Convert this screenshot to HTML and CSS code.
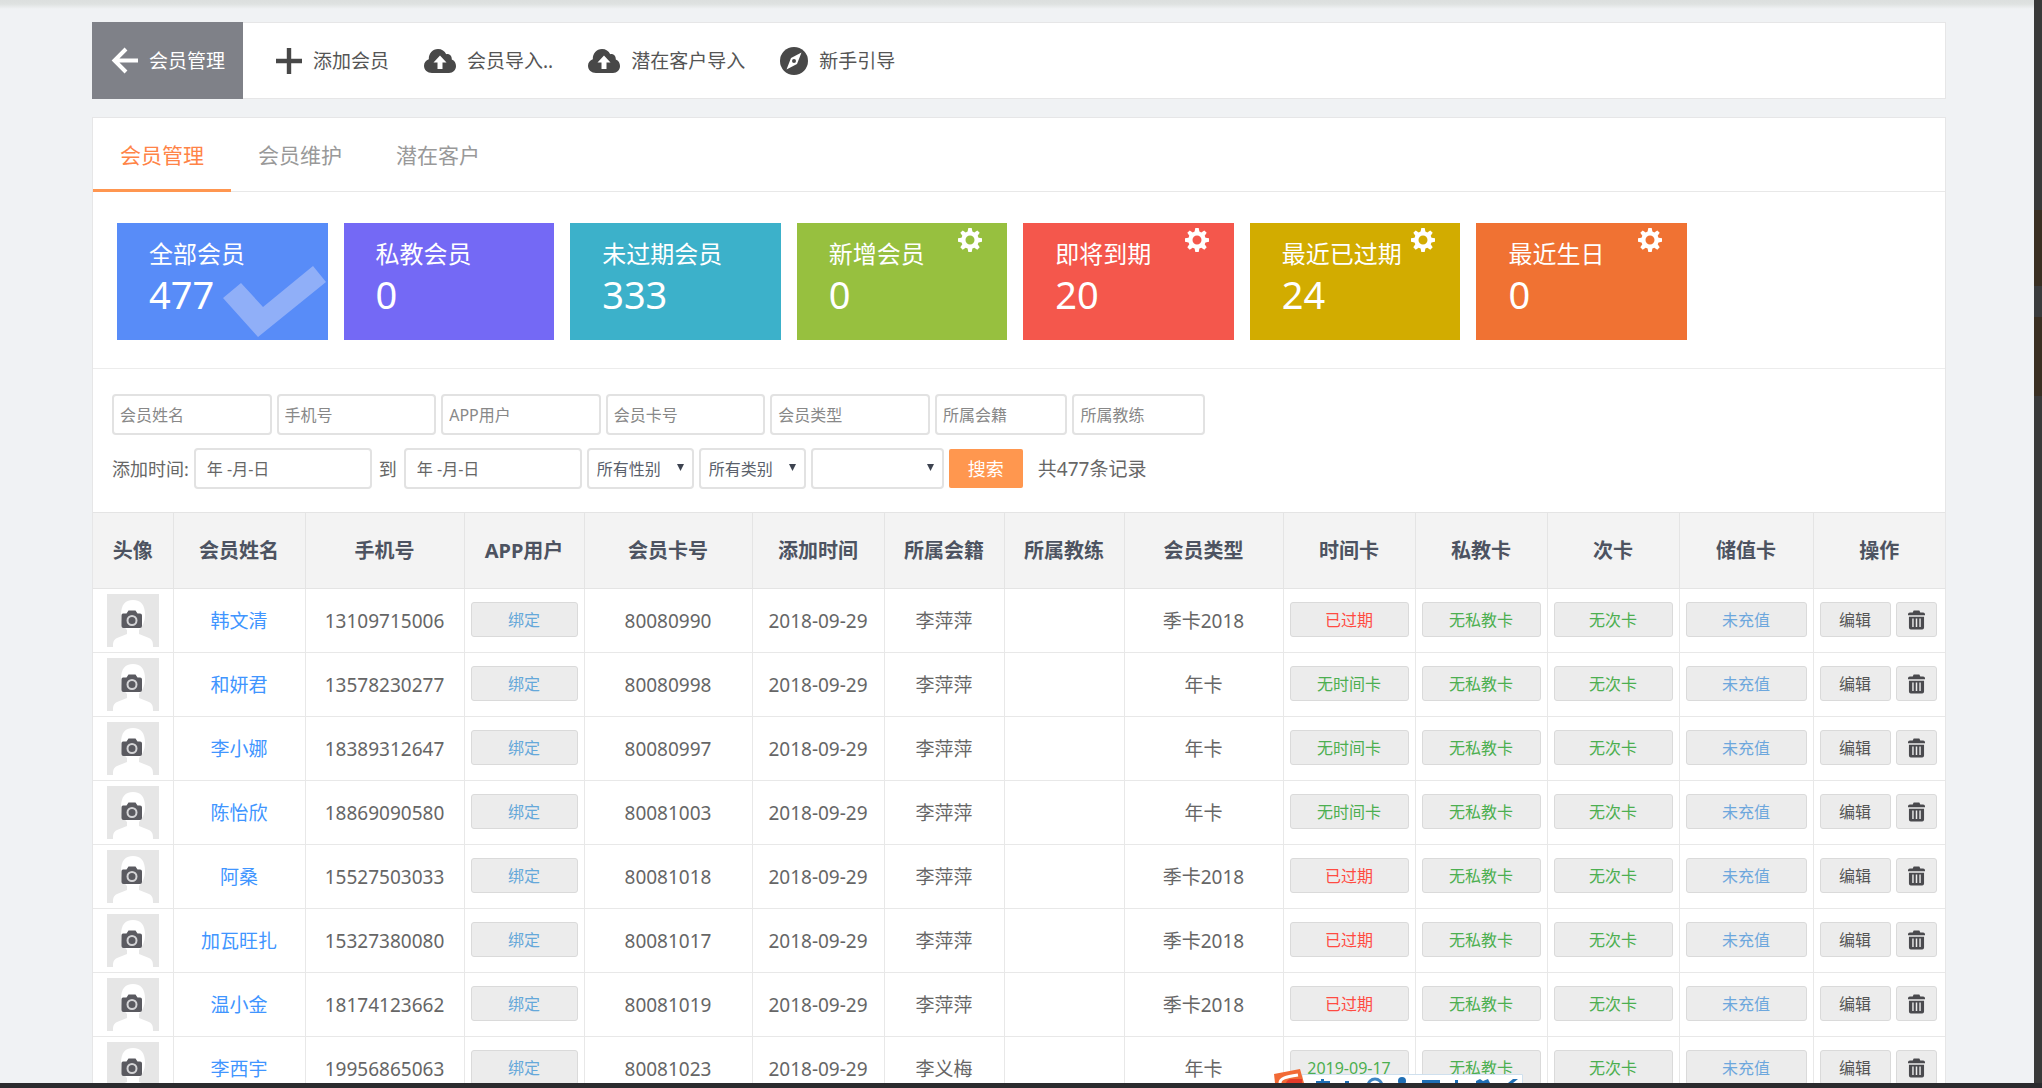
FILE: index.html
```html
<!DOCTYPE html>
<html lang="zh-CN">
<head>
<meta charset="utf-8">
<title>会员管理</title>
<link rel="stylesheet" href="styles.css">
</head>
<body>
<svg class="sprite" aria-hidden="true">
  <symbol id="i-cloud" viewBox="0 0 32 24"><path fill-rule="evenodd" d="M8 24C3.500 24 0 21 0 16.800c0-3.300 2-5.600 4.800-6.600C4.600 4.500 8.500 0 14 0c3.800 0 6.800 2 8.200 5.200 3.200-.6 5.800 1.700 5.600 5.200C30.500 11.500 32 14 32 17c0 4-3 7-7 7zM16 6.500 9.500 13.500h4V20h5v-6.500h4z"/></symbol>
  <symbol id="i-gear" viewBox="0 0 24 24"><path fill-rule="evenodd" d="M10.300 0h3.400l.7 3.600 1.900.8 3-2 2.400 2.400-2 3 .8 1.900 3.500.6v3.400l-3.500.7-.8 1.900 2 3-2.400 2.400-3-2-1.900.8-.7 3.500h-3.400l-.7-3.500-1.900-.8-3 2-2.400-2.400 2-3-.8-1.900L0 13.700v-3.400l3.500-.6.8-1.900-2-3 2.400-2.400 3 2 1.900-.8zM12 7.500a4.500 4.500 0 1 0 0 9 4.500 4.500 0 0 0 0-9z"/></symbol>
  <symbol id="i-avatar" viewBox="0 0 52 53"><path fill="#e6e6e6" d="M0 0h52v53H0z"/><path fill="#fff" d="M14 21C14 11 18 6 26 6s12 5 12 15c0 7-3 12-6 15v4l10 4c4 2 4 5 4 9H6c0-4 0-7 4-9l10-4v-4c-3-3-6-8-6-15z"/><path fill="#5a5a60" fill-rule="evenodd" d="M16 19.500h3.500l2-3h7l2 3H33q2 0 2 2V32q0 2-2 2H16.500q-2 0-2-2V21.500q0-2 1.500-2z"/><circle cx="25" cy="26.500" r="4.500" fill="none" stroke="#d4d4d6" stroke-width="2"/></symbol>
  <symbol id="i-trash" viewBox="0 0 18 20"><path fill-rule="evenodd" d="M6 0h6l1 2h3q2 0 2 2v1H0V4q0-2 2-2h3zM1 6.500h16V18q0 2-2 2H3q-2 0-2-2zM4.500 8.500v9H6v-9zm3.700 0v9h1.600v-9zm3.800 0v9h1.500v-9z"/></symbol>
</svg>

<div class="desktop">
  <main class="page">
    <header class="toolbar">
      <button class="back" type="button">
        <svg width="27" height="27" viewBox="0 0 27 27" fill="none" stroke="#fff" stroke-width="4"><path d="M15 2 3.500 13.500 15 25M4 13.500h23"/></svg>
        会员管理
      </button>
      <nav class="tools">
        <a class="tool" href="#"><svg width="26" height="26" viewBox="0 0 26 26"><path d="M10.800 0h4.400v10.800H26v4.400H15.200V26h-4.400V15.200H0v-4.400h10.800z"/></svg>添加会员</a>
        <a class="tool" href="#"><svg width="32" height="24"><use href="#i-cloud"/></svg>会员导入..</a>
        <a class="tool" href="#"><svg width="32" height="24"><use href="#i-cloud"/></svg>潜在客户导入</a>
        <a class="tool" href="#"><svg width="28" height="28" viewBox="0 0 28 28"><circle cx="14" cy="14" r="14"/><path fill="#fff" fill-rule="evenodd" d="M21.500 5.500 17 17 6.500 22.500 11 11zM14 12a2 2 0 1 0 0 4 2 2 0 0 0 0-4z"/></svg>新手引导</a>
      </nav>
    </header>

    <section class="panel">
      <nav class="tabs">
        <a class="tab tab-active" href="#">会员管理</a>
        <a class="tab" href="#">会员维护</a>
        <a class="tab" href="#">潜在客户</a>
      </nav>

      <div class="cards">
        <div class="card blue"><span class="card-label">全部会员</span><span class="card-value">477</span><svg class="check" width="103" height="71" viewBox="0 0 103 71"><path d="M0 32 18 17l22 24L90 0l13 16-68 55z"/></svg></div>
        <div class="card purple"><span class="card-label">私教会员</span><span class="card-value">0</span></div>
        <div class="card teal"><span class="card-label">未过期会员</span><span class="card-value">333</span></div>
        <div class="card green"><span class="card-label">新增会员</span><span class="card-value">0</span><button class="gear" type="button" aria-label="设置"><svg width="24" height="24"><use href="#i-gear"/></svg></button></div>
        <div class="card red"><span class="card-label">即将到期</span><span class="card-value">20</span><button class="gear" type="button" aria-label="设置"><svg width="24" height="24"><use href="#i-gear"/></svg></button></div>
        <div class="card gold"><span class="card-label">最近已过期</span><span class="card-value">24</span><button class="gear" type="button" aria-label="设置"><svg width="24" height="24"><use href="#i-gear"/></svg></button></div>
        <div class="card orange"><span class="card-label">最近生日</span><span class="card-value">0</span><button class="gear" type="button" aria-label="设置"><svg width="24" height="24"><use href="#i-gear"/></svg></button></div>
      </div>

      <form class="filters">
        <div class="filter-row filter-texts">
          <input class="field wide" type="text" placeholder="会员姓名" aria-label="会员姓名">
          <input class="field wide" type="text" placeholder="手机号" aria-label="手机号">
          <input class="field wide" type="text" placeholder="APP用户" aria-label="APP用户">
          <input class="field wide" type="text" placeholder="会员卡号" aria-label="会员卡号">
          <input class="field wide" type="text" placeholder="会员类型" aria-label="会员类型">
          <input class="field narrow" type="text" placeholder="所属会籍" aria-label="所属会籍">
          <input class="field narrow" type="text" placeholder="所属教练" aria-label="所属教练">
        </div>
        <div class="filter-row">
          <label for="from">添加时间:</label>
          <input class="field date" id="from" type="text" placeholder="年 -月-日">
          <label class="to" for="until">到</label>
          <input class="field date" id="until" type="text" placeholder="年 -月-日">
          <span class="pick"><select class="field" aria-label="性别"><option>所有性别</option></select><svg width="7" height="7" viewBox="0 0 7 7"><path d="M0 0h7L3.500 7z"/></svg></span>
          <span class="pick"><select class="field" aria-label="类别"><option>所有类别</option></select><svg width="7" height="7" viewBox="0 0 7 7"><path d="M0 0h7L3.500 7z"/></svg></span>
          <span class="pick pick-wide"><select class="field" aria-label="其他"><option></option></select><svg width="7" height="7" viewBox="0 0 7 7"><path d="M0 0h7L3.500 7z"/></svg></span>
          <button class="search" type="submit">搜索</button>
          <span class="total">共477条记录</span>
        </div>
      </form>

      <table class="members">
        <colgroup><col class="w80"><col class="w132"><col class="w159"><col class="w120"><col class="w168"><col class="w132"><col class="w120"><col class="w120"><col class="w159"><col class="w132"><col class="w132"><col class="w132"><col class="w134"><col></colgroup>
        <thead>
          <tr><th>头像</th><th>会员姓名</th><th>手机号</th><th>APP用户</th><th>会员卡号</th><th>添加时间</th><th>所属会籍</th><th>所属教练</th><th>会员类型</th><th>时间卡</th><th>私教卡</th><th>次卡</th><th>储值卡</th><th>操作</th></tr>
        </thead>
        <tbody>
          <tr><td><svg class="avatar" width="52" height="53"><use href="#i-avatar"/></svg></td><td><a href="#">韩文清</a></td><td>13109715006</td><td class="act"><button class="btn bind" type="button">绑定</button></td><td>80080990</td><td>2018-09-29</td><td>李萍萍</td><td></td><td>季卡2018</td><td class="act"><button class="btn expired" type="button">已过期</button></td><td class="act"><button class="btn ok" type="button">无私教卡</button></td><td class="act"><button class="btn ok" type="button">无次卡</button></td><td class="act"><button class="btn info" type="button">未充值</button></td><td class="act"><div class="ops"><button class="btn edit" type="button">编辑</button><button class="btn trash" type="button" aria-label="删除"><svg width="17" height="20"><use href="#i-trash"/></svg></button></div></td></tr>
          <tr><td><svg class="avatar" width="52" height="53"><use href="#i-avatar"/></svg></td><td><a href="#">和妍君</a></td><td>13578230277</td><td class="act"><button class="btn bind" type="button">绑定</button></td><td>80080998</td><td>2018-09-29</td><td>李萍萍</td><td></td><td>年卡</td><td class="act"><button class="btn ok" type="button">无时间卡</button></td><td class="act"><button class="btn ok" type="button">无私教卡</button></td><td class="act"><button class="btn ok" type="button">无次卡</button></td><td class="act"><button class="btn info" type="button">未充值</button></td><td class="act"><div class="ops"><button class="btn edit" type="button">编辑</button><button class="btn trash" type="button" aria-label="删除"><svg width="17" height="20"><use href="#i-trash"/></svg></button></div></td></tr>
          <tr><td><svg class="avatar" width="52" height="53"><use href="#i-avatar"/></svg></td><td><a href="#">李小娜</a></td><td>18389312647</td><td class="act"><button class="btn bind" type="button">绑定</button></td><td>80080997</td><td>2018-09-29</td><td>李萍萍</td><td></td><td>年卡</td><td class="act"><button class="btn ok" type="button">无时间卡</button></td><td class="act"><button class="btn ok" type="button">无私教卡</button></td><td class="act"><button class="btn ok" type="button">无次卡</button></td><td class="act"><button class="btn info" type="button">未充值</button></td><td class="act"><div class="ops"><button class="btn edit" type="button">编辑</button><button class="btn trash" type="button" aria-label="删除"><svg width="17" height="20"><use href="#i-trash"/></svg></button></div></td></tr>
          <tr><td><svg class="avatar" width="52" height="53"><use href="#i-avatar"/></svg></td><td><a href="#">陈怡欣</a></td><td>18869090580</td><td class="act"><button class="btn bind" type="button">绑定</button></td><td>80081003</td><td>2018-09-29</td><td>李萍萍</td><td></td><td>年卡</td><td class="act"><button class="btn ok" type="button">无时间卡</button></td><td class="act"><button class="btn ok" type="button">无私教卡</button></td><td class="act"><button class="btn ok" type="button">无次卡</button></td><td class="act"><button class="btn info" type="button">未充值</button></td><td class="act"><div class="ops"><button class="btn edit" type="button">编辑</button><button class="btn trash" type="button" aria-label="删除"><svg width="17" height="20"><use href="#i-trash"/></svg></button></div></td></tr>
          <tr><td><svg class="avatar" width="52" height="53"><use href="#i-avatar"/></svg></td><td><a href="#">阿桑</a></td><td>15527503033</td><td class="act"><button class="btn bind" type="button">绑定</button></td><td>80081018</td><td>2018-09-29</td><td>李萍萍</td><td></td><td>季卡2018</td><td class="act"><button class="btn expired" type="button">已过期</button></td><td class="act"><button class="btn ok" type="button">无私教卡</button></td><td class="act"><button class="btn ok" type="button">无次卡</button></td><td class="act"><button class="btn info" type="button">未充值</button></td><td class="act"><div class="ops"><button class="btn edit" type="button">编辑</button><button class="btn trash" type="button" aria-label="删除"><svg width="17" height="20"><use href="#i-trash"/></svg></button></div></td></tr>
          <tr><td><svg class="avatar" width="52" height="53"><use href="#i-avatar"/></svg></td><td><a href="#">加瓦旺扎</a></td><td>15327380080</td><td class="act"><button class="btn bind" type="button">绑定</button></td><td>80081017</td><td>2018-09-29</td><td>李萍萍</td><td></td><td>季卡2018</td><td class="act"><button class="btn expired" type="button">已过期</button></td><td class="act"><button class="btn ok" type="button">无私教卡</button></td><td class="act"><button class="btn ok" type="button">无次卡</button></td><td class="act"><button class="btn info" type="button">未充值</button></td><td class="act"><div class="ops"><button class="btn edit" type="button">编辑</button><button class="btn trash" type="button" aria-label="删除"><svg width="17" height="20"><use href="#i-trash"/></svg></button></div></td></tr>
          <tr><td><svg class="avatar" width="52" height="53"><use href="#i-avatar"/></svg></td><td><a href="#">温小金</a></td><td>18174123662</td><td class="act"><button class="btn bind" type="button">绑定</button></td><td>80081019</td><td>2018-09-29</td><td>李萍萍</td><td></td><td>季卡2018</td><td class="act"><button class="btn expired" type="button">已过期</button></td><td class="act"><button class="btn ok" type="button">无私教卡</button></td><td class="act"><button class="btn ok" type="button">无次卡</button></td><td class="act"><button class="btn info" type="button">未充值</button></td><td class="act"><div class="ops"><button class="btn edit" type="button">编辑</button><button class="btn trash" type="button" aria-label="删除"><svg width="17" height="20"><use href="#i-trash"/></svg></button></div></td></tr>
          <tr><td><svg class="avatar" width="52" height="53"><use href="#i-avatar"/></svg></td><td><a href="#">李西宇</a></td><td>19956865063</td><td class="act"><button class="btn bind" type="button">绑定</button></td><td>80081023</td><td>2018-09-29</td><td>李义梅</td><td></td><td>年卡</td><td class="act"><button class="btn ok" type="button">2019-09-17</button></td><td class="act"><button class="btn ok" type="button">无私教卡</button></td><td class="act"><button class="btn ok" type="button">无次卡</button></td><td class="act"><button class="btn info" type="button">未充值</button></td><td class="act"><div class="ops"><button class="btn edit" type="button">编辑</button><button class="btn trash" type="button" aria-label="删除"><svg width="17" height="20"><use href="#i-trash"/></svg></button></div></td></tr>
        </tbody>
      </table>
    </section>

    <svg class="ime" width="250" height="14" viewBox="0 0 250 14" aria-hidden="true">
      <path fill="#fff" stroke="#cfe0ee" d="M28 5.500h220.500V15H28z"/>
      <path fill="#f26a35" d="M0 5 26 0l4 14H1z"/>
      <path fill="none" stroke="#fff" stroke-width="3" d="M6 14c0-5 6-6 18-8"/>
      <path fill="#e43a2a" d="M12 14q1-4 6-4h10v4z"/>
      <g fill="#1f6fb5"><path d="M42 12h5V10h3v2h6v2H42zM71 12h4v2h-4zM148 11h18v3h-18zM181 11h3v3h-3zM202 12l4-2 3 2 5-2 2 4h-14zM234 14l5-4 5 0-5 4z"/><circle cx="128" cy="12" r="4"/></g>
      <circle cx="101" cy="17" r="7" fill="none" stroke="#3f86c4" stroke-width="3"/>
    </svg>
  </main>
  <div class="edge-right"></div>
  <div class="edge-bottom"></div>
</div>
</body>
</html>
```

FILE: styles.css
```css
* { box-sizing: border-box; }

body {
  margin: 0;
  font-family: "Noto Sans", "Noto Sans CJK SC", sans-serif;
  font-size: 19px;
  line-height: 28px;
  color: #666;
}

button, input, select { font: inherit; color: inherit; }
button { padding: 0; border: 0; cursor: pointer; }
a { text-decoration: none; color: inherit; }
svg { display: block; flex: none; }
.sprite { position: absolute; width: 0; height: 0; }

.desktop {
  display: grid;
  grid-template: minmax(0, 1fr) 5px / minmax(0, 1fr) 8px;
  height: 100vh;
  overflow: hidden;
}

.page {
  position: relative;
  overflow: hidden;
  padding: 22px 88px 0 92px;
  background: linear-gradient(#dcdfde 0, #dfe2e1 4px, #f0f2f4 9px);
}

.edge-right {
  background: linear-gradient(#393939 210px, #3a2f22 210px 286px, #3a3b3c 286px 317px, #3a2f22 317px 396px, #393939 396px);
}
.edge-bottom { grid-column: 1 / -1; background: #2b2b2e; }

.toolbar {
  display: flex;
  height: 77px;
  margin-bottom: 18px;
  background: #fff;
  border: solid #e6e6e7;
  border-width: 1px 1px 1px 0;
}
.back {
  display: flex;
  align-items: center;
  gap: 11px;
  width: 151px;
  margin: -1px 0;
  padding-left: 19px;
  background: #7f8188;
  color: #fff;
}
.tools { display: flex; gap: 35px; padding-left: 33px; }
.tool { display: flex; align-items: center; gap: 11px; color: #555; fill: #484848; }

.panel { background: #fff; border: 1px solid #e6e6e7; }

.tabs { display: flex; height: 74px; border-bottom: 1px solid #e8e8e8; }
.tab {
  margin-bottom: -1px;
  padding: 23px 27px 0;
  border-bottom: 3px solid transparent;
  font-size: 21px;
  color: #999;
}
.tab-active { color: #ff8447; border-color: #ff9650; }

.cards {
  display: grid;
  grid-template-columns: repeat(7, 1fr);
  gap: 16px;
  max-width: 1618px;
  padding: 31px 24px 28px;
}
.card {
  position: relative;
  display: flex;
  flex-direction: column;
  height: 117px;
  padding: 14px 0 0 32px;
  color: #fff;
}
.card-label { font-size: 24px; line-height: 34px; white-space: nowrap; }
.card-value { font-size: 38px; line-height: 46px; }
.blue { background: #588cf8; }
.purple { background: #7469f5; }
.teal { background: #3cb1ca; }
.green { background: #97c03f; }
.red { background: #f4574c; }
.gold { background: #d2ac00; }
.orange { background: #f07233; }
.check { position: absolute; right: 2px; bottom: 3px; fill: #90aff8; }
.gear { position: absolute; top: 5px; right: 25px; background: none; fill: #fff; }

.filters {
  display: flex;
  flex-direction: column;
  gap: 13px;
  padding: 25px 19px 23px;
  border-top: 1px solid #ececec;
}
.filter-row { display: flex; align-items: center; gap: 5px; font-size: 18px; }
.filter-texts { max-width: 1093px; }
.field {
  min-width: 0;
  height: 41px;
  padding: 0 6px;
  border: 2px solid #e2e2e2;
  border-radius: 4px;
  background: #fff;
  font-size: 16px;
}
.field::placeholder { color: #888; opacity: 1; }
.wide { flex: 1 1 159px; }
.narrow { flex: 1 1 132px; }
.date { width: 178px; padding: 0 11px; }
.date::placeholder { color: #666; }
.to { padding: 0 2px; }
.pick { position: relative; width: 107px; }
.pick-wide { width: 133px; }
.pick select { width: 100%; padding: 0 8px; appearance: none; color: #5a5f6b; }
.pick svg { position: absolute; top: 16px; right: 10px; fill: #3d4350; }
.search { width: 74px; height: 39px; border-radius: 2px; background: #ff974f; color: #fff; }
.total { padding-left: 10px; font-size: 19px; }

.members { width: 100%; table-layout: fixed; border-collapse: collapse; text-align: center; }
.w80 { width: 80px; }
.w120 { width: 120px; }
.w132 { width: 132px; }
.w134 { width: 134px; }
.w159 { width: 159px; }
.w168 { width: 168px; }
.members th {
  height: 76px;
  padding: 0;
  background: #f3f3f3;
  border: 1px solid #e4e4e4;
  border-left: 0;
  font-size: 20px;
  color: #4d5361;
}
.members td {
  height: 64px;
  padding: 0;
  border: 1px solid #e8e8e8;
  border-left: 0;
  white-space: nowrap;
}
.members th:last-child, .members td:last-child { border-right: 0; }
.members a { color: #4095ff; }
.members .act { padding: 0 6px 2px; }
.avatar { margin: 0 auto; }

.btn {
  width: 100%;
  height: 35px;
  border: 1px solid #dadada;
  border-radius: 3px;
  background: #ececec;
  font-size: 16px;
  line-height: 24px;
  vertical-align: middle;
}
.bind { color: #65a8da; }
.expired { color: #ff4b42; }
.ok { color: #4caf50; }
.info { color: #6da7dd; }
.ops { display: flex; gap: 5px; }
.edit { width: 71px; color: #555; }
.trash { display: flex; align-items: center; justify-content: center; width: 41px; fill: #4a4a4e; }

.ime { position: absolute; left: 1274px; bottom: 0; }
```
